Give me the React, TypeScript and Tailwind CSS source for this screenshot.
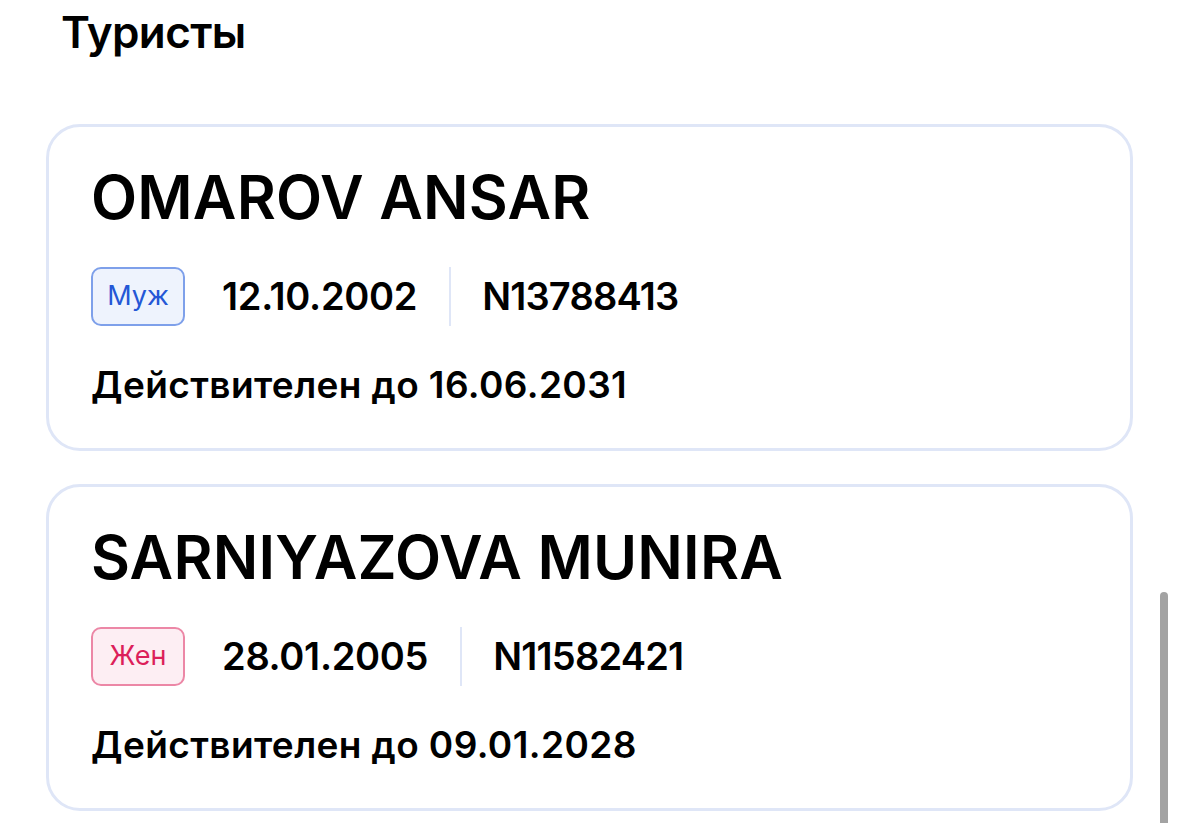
import React from 'react';

interface Tourist {
  name: string;
  gender: 'male' | 'female';
  birthDate: string;
  passport: string;
  validUntil: string;
}

const tourists: Tourist[] = [
  { name: 'OMAROV ANSAR', gender: 'male', birthDate: '12.10.2002', passport: 'N13788413', validUntil: '16.06.2031' },
  { name: 'SARNIYAZOVA MUNIRA', gender: 'female', birthDate: '28.01.2005', passport: 'N11582421', validUntil: '09.01.2028' },
];

function GenderBadge({ gender }: { gender: Tourist['gender'] }) {
  if (gender === 'male') {
    return (
      <span className="flex h-[59px] w-[94px] items-center justify-center rounded-[10px] border-2 border-[#7ea0ea] bg-[#eef3fd] text-[27px] text-[#2457d6]">
        Муж
      </span>
    );
  }
  return (
    <span className="flex h-[59px] w-[94px] items-center justify-center rounded-[10px] border-2 border-[#ec87a6] bg-[#fdeef3] text-[27px] text-[#dc1f5a]">
      Жен
    </span>
  );
}

function TouristCard({ tourist }: { tourist: Tourist }) {
  return (
    <div className="flex h-[327px] flex-col rounded-[34px] border-[3px] border-[#dfe6f7] bg-white pl-[42px] pt-[38px]">
      <h3 className="text-[60px] font-semibold leading-[64px] tracking-[0.2px] text-black">{tourist.name}</h3>
      <div className="mt-[38px] flex items-center">
        <GenderBadge gender={tourist.gender} />
        <span className="ml-[37px] text-[38px] font-semibold tracking-[-0.3px] text-black">{tourist.birthDate}</span>
        <span className="ml-[32px] mr-[31px] h-[59px] w-[2px] bg-[#dfe6f7]" />
        <span className="text-[38px] font-semibold tracking-[-0.8px] text-black">{tourist.passport}</span>
      </div>
      <p className="mt-[31px] text-[37px] font-semibold tracking-[0.4px] text-black">Действителен до {tourist.validUntil}</p>
    </div>
  );
}

export default function App() {
  return (
    <div
      className="relative h-[823px] w-[1179px] overflow-hidden bg-white"
      style={{ fontFamily: 'Inter, "Noto Sans", sans-serif' }}
    >
      <div className="px-[46px]">
        <h2 className="ml-[15px] pt-[4px] text-[44px] font-semibold leading-[56px] tracking-[-0.6px] text-black">Туристы</h2>
        <div className="mt-[64px] flex flex-col gap-[33px]">
          {tourists.map((t) => (
            <TouristCard key={t.passport} tourist={t} />
          ))}
        </div>
      </div>
      <div className="absolute right-[11px] top-[592px] h-[240px] w-[8px] rounded-full bg-[#a3a3a3]" />
    </div>
  );
}
